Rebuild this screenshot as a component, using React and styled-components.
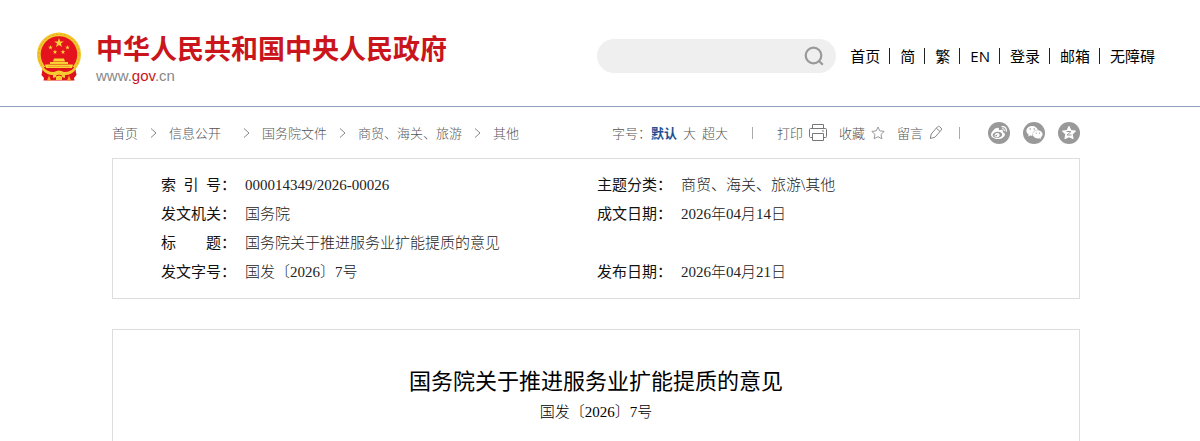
import React, { useState } from "react";
import styled, { createGlobalStyle } from "styled-components";
import { FaWeibo, FaWeixin } from "react-icons/fa";

const navLinks = ["首页", "简", "繁", "EN", "登录", "邮箱", "无障碍"];

const crumbs = [
  { label: "首页" },
  { label: "信息公开", wide: true },
  { label: "国务院文件" },
  { label: "商贸、海关、旅游" },
  { label: "其他" },
];

const fontSizes = ["默认", "大", "超大"];

export default function App() {
  const [keyword, setKeyword] = useState("");
  const [size, setSize] = useState("默认");

  return (
    <>
      <GlobalStyle />
      <Header>
        <Logo href="#">
          <Emblem />
          <LogoText>
            <SiteName>中华人民共和国中央人民政府</SiteName>
            <SiteUrl>
              www.<span>gov</span>.cn
            </SiteUrl>
          </LogoText>
        </Logo>
        <HeaderTools>
          <SearchForm onSubmit={(e) => e.preventDefault()}>
            <SearchInput
              type="text"
              aria-label="搜索"
              value={keyword}
              onChange={(e) => setKeyword(e.target.value)}
            />
            <SearchButton type="submit" aria-label="搜索">
              <SearchIcon />
            </SearchButton>
          </SearchForm>
          <Nav>
            {navLinks.map((item) => (
              <NavLink key={item} href="#">
                {item}
              </NavLink>
            ))}
          </Nav>
        </HeaderTools>
      </Header>

      <Main>
        <Toolbar>
          <Crumbs>
            {crumbs.map((item, i) => (
              <React.Fragment key={item.label}>
                {i > 0 && <Chevron />}
                <Crumb href="#" $wide={item.wide}>
                  {item.label}
                </Crumb>
              </React.Fragment>
            ))}
          </Crumbs>
          <Tools>
            <SizeGroup>
              <span>字号：</span>
              {fontSizes.map((item) => (
                <SizeButton
                  key={item}
                  type="button"
                  $active={item === size}
                  onClick={() => setSize(item)}
                >
                  {item}
                </SizeButton>
              ))}
            </SizeGroup>
            <Divider />
            <Actions>
              <ToolButton type="button">
                打印
                <PrintIcon />
              </ToolButton>
              <ToolButton type="button">
                收藏
                <StarIcon />
              </ToolButton>
              <ToolButton type="button">
                留言
                <PencilIcon />
              </ToolButton>
            </Actions>
            <Divider />
            <Shares>
              <ShareLink href="#" aria-label="微博">
                <FaWeibo size={16} />
              </ShareLink>
              <ShareLink href="#" aria-label="微信">
                <FaWeixin size={17} />
              </ShareLink>
              <ShareLink href="#" aria-label="QQ空间">
                <QzoneIcon />
              </ShareLink>
            </Shares>
          </Tools>
        </Toolbar>

        <InfoBox>
          <InfoTable>
            <colgroup>
              <LabelCol />
              <ValueCol />
              <LabelCol />
              <col />
            </colgroup>
            <tbody>
              <tr>
                <Label>索&nbsp;&nbsp;引&nbsp;&nbsp;号：</Label>
                <Value>000014349/2026-00026</Value>
                <Label>主题分类：</Label>
                <Value>商贸、海关、旅游\其他</Value>
              </tr>
              <tr>
                <Label>发文机关：</Label>
                <Value>国务院</Value>
                <Label>成文日期：</Label>
                <Value>2026年04月14日</Value>
              </tr>
              <tr>
                <Label>标{"\u3000\u3000"}题：</Label>
                <Value colSpan={3}>国务院关于推进服务业扩能提质的意见</Value>
              </tr>
              <tr>
                <Label>发文字号：</Label>
                <Value>国发〔2026〕7号</Value>
                <Label>发布日期：</Label>
                <Value>2026年04月21日</Value>
              </tr>
            </tbody>
          </InfoTable>
        </InfoBox>

        <Article>
          <Title>国务院关于推进服务业扩能提质的意见</Title>
          <DocNumber>国发〔2026〕7号</DocNumber>
        </Article>
      </Main>
    </>
  );
}

function Emblem() {
  const star = "M0-5 1.2-1.6 4.8-1.6 1.9.6 3 4 0 1.9-3 4-1.9.6-4.8-1.6-1.2-1.6Z";
  return (
    <svg width="46" height="50" viewBox="0 0 46 50" aria-hidden="true">
      <circle cx="23" cy="22.500" r="22" fill="#f3c62c" />
      <circle cx="23" cy="22.500" r="20.300" fill="none" stroke="#dfa01c" strokeWidth=".8" strokeDasharray="2 2" />
      <circle cx="23" cy="22.500" r="18.300" fill="#e5131d" />
      <path d="M7 35h32l1.500 8-2.500 3 .5 2.500H7.500L8 46l-2.500-3Z" fill="#df121c" />
      <g fill="#f8d535">
        <path d={star} transform="translate(23 11)" />
        <path d={star} transform="translate(14.500 15.500) scale(.48)" />
        <path d={star} transform="translate(31.500 15.500) scale(.48)" />
        <path d={star} transform="translate(19 20) scale(.48)" />
        <path d={star} transform="translate(27 20) scale(.48)" />
        <path d="M18 26.500h10l1 3H17ZM14 30h18v2H14ZM9 32.500h28L36 36H10Z" />
      </g>
      <path d="M15 32.300h16M12 34.500h22" stroke="#e5781c" strokeWidth=".5" />
      <path d="M7 34q3 6 11 6 5-3 10 0 8 0 11-6l1 3q-4 6-11 6l-2 1q-4-2-8 0l-2-1Q10 43 6 37Z" fill="#f5cb30" />
      <path d="M17 43q6-5 12 0v3l-3-1v3h-6v-3l-3 1Z" fill="#f5cb30" />
      <path d="M20 44q3-2 6 0" fill="none" stroke="#df121c" />
      <path d="M11 48.500l2-5 2 5ZM31 48.500l2-5 2 5Z" fill="#f5a52a" />
    </svg>
  );
}

function SearchIcon() {
  return (
    <svg width="20" height="20" viewBox="0 0 20 20" fill="none" stroke="#999" strokeWidth="2.200" aria-hidden="true">
      <circle cx="9.500" cy="9.500" r="7.800" />
      <path d="m14.500 14.500 4.300 4.300" />
    </svg>
  );
}

function Chevron() {
  return (
    <svg width="7" height="10" viewBox="0 0 7 10" fill="none" stroke="#888" aria-hidden="true">
      <path d="m1 .5 5 4.500-5 4.500" />
    </svg>
  );
}

function PrintIcon() {
  return (
    <svg width="18" height="17" viewBox="0 0 18 17" fill="none" stroke="#777" aria-hidden="true">
      <path d="M3.500 4.500v-4h11v4M3.500 13.500h-2a1 1 0 0 1-1-1v-7a1 1 0 0 1 1-1h15a1 1 0 0 1 1 1v7a1 1 0 0 1-1 1h-2M3.500 9.500h11v7h-11ZM13 7h2" />
    </svg>
  );
}

function StarIcon() {
  return (
    <svg width="14" height="14" viewBox="0 0 14 14" fill="none" stroke="#999" strokeLinejoin="round" aria-hidden="true">
      <path d="m7 1 1.800 3.900 4.400.5-3.200 3 .9 4.400L7 10.700l-3.900 2.100.9-4.400-3.200-3 4.400-.5Z" />
    </svg>
  );
}

function PencilIcon() {
  return (
    <svg width="14" height="15" viewBox="0 0 14 15" fill="none" stroke="#888" strokeLinejoin="round" aria-hidden="true">
      <path d="M1.300 13.500 2.200 9 8.500 1.800q1-1 2.100-.1l1.500 1.300q1 1 .1 2.100L6 12.200ZM7.300 3.200l3.700 3.300" />
    </svg>
  );
}

function QzoneIcon() {
  return (
    <svg width="16" height="16" viewBox="0 0 16 16" fill="#fff" aria-hidden="true">
      <path
        d="m8 1.300 2 4.200 4.600.6-3.300 3.200.8 4.500L8 11.700l-4.100 2.100.8-4.500L1.400 6.100l4.600-.6Z"
        stroke="#fff"
        strokeLinejoin="round"
      />
      <path d="M5.500 6.500h4.500L6 10h4.500" fill="none" stroke="#999" />
    </svg>
  );
}

const GlobalStyle = createGlobalStyle`
  * {
    box-sizing: border-box;
  }
  body {
    margin: 0;
    background: #fff;
    color: #222;
    font-family: "Liberation Serif", "Noto Sans CJK SC", serif;
    font-weight: 300;
  }
  a {
    color: inherit;
    text-decoration: none;
  }
  button {
    padding: 0;
    border: none;
    background: none;
    color: inherit;
    font: inherit;
    cursor: pointer;
  }
  svg {
    display: block;
    flex-shrink: 0;
  }
`;

const Header = styled.header`
  display: flex;
  align-items: flex-start;
  justify-content: space-between;
  padding: 32px 45px 21px 36px;
  border-bottom: 1px solid #8fa0bd;
`;

const Logo = styled.a`
  display: flex;
  align-items: flex-start;
  gap: 14px;
`;

const LogoText = styled.div`
  display: flex;
  flex-direction: column;
  gap: 3px;
`;

const SiteName = styled.span`
  color: #c9151b;
  font-family: "Noto Sans CJK SC", sans-serif;
  font-size: 27px;
  font-weight: 700;
  line-height: 32px;
  white-space: nowrap;
`;

const SiteUrl = styled.span`
  color: #888;
  font-family: "Liberation Sans", sans-serif;
  font-size: 15px;
  font-weight: 400;
  line-height: 18px;

  span {
    color: #c9151b;
  }
`;

const HeaderTools = styled.div`
  display: flex;
  align-items: center;
  height: 48px;
`;

const SearchForm = styled.form`
  display: flex;
  align-items: center;
  width: 239px;
  height: 34px;
  padding: 0 12px 0 16px;
  border-radius: 17px;
  background: #efefef;
`;

const SearchInput = styled.input`
  flex: 1;
  min-width: 0;
  border: none;
  background: transparent;
  font-size: 15px;
  &:focus {
    outline: none;
  }
`;

const SearchButton = styled.button`
  display: flex;
`;

const Nav = styled.nav`
  display: flex;
  align-items: center;
  margin-left: 14px;
  color: #000;
  font-family: "Open Sans", "Noto Sans CJK SC", sans-serif;
  font-size: 15px;
  font-weight: 400;
  line-height: 16px;
  white-space: nowrap;
`;

const NavLink = styled.a`
  & + & {
    margin-left: 9px;
    padding-left: 10px;
    border-left: 1px solid #222;
  }
`;

const Main = styled.main`
  padding: 0 120px 0 112px;
`;

const Toolbar = styled.div`
  display: flex;
  align-items: center;
  justify-content: space-between;
  height: 51px;
  color: #555;
  font-size: 13px;
  white-space: nowrap;
`;

const Crumbs = styled.nav`
  display: flex;
  align-items: center;
  gap: 12px;
`;

const Crumb = styled.a`
  margin-right: ${(props) => (props.$wide ? "10px" : "0")};
`;

const Tools = styled.div`
  display: flex;
  align-items: center;
`;

const SizeGroup = styled.div`
  display: flex;
  gap: 6px;

  span {
    margin-right: -6px;
  }
`;

const SizeButton = styled.button`
  color: ${(props) => (props.$active ? "#1c4f93" : "inherit")};
  font-weight: ${(props) => (props.$active ? "700" : "inherit")};
`;

const Divider = styled.span`
  width: 1px;
  height: 12px;
  margin: 0 24px;
  background: #aaa;
`;

const Actions = styled.div`
  display: flex;
  gap: 12px;
  margin-right: -8px;
`;

const ToolButton = styled.button`
  display: flex;
  align-items: center;
  gap: 6px;
`;

const Shares = styled.div`
  display: flex;
  gap: 13px;
  margin-left: 4px;
`;

const ShareLink = styled.a`
  display: flex;
  align-items: center;
  justify-content: center;
  width: 22px;
  height: 22px;
  border-radius: 50%;
  background: #999;
  color: #fff;
`;

const InfoBox = styled.section`
  padding: 12px 48px 11px;
  border: 1px solid #ddd;
`;

const InfoTable = styled.table`
  width: 100%;
  table-layout: fixed;
  border-collapse: collapse;
  font-size: 15px;
  line-height: 29px;
`;

const LabelCol = styled.col`
  width: 84px;
`;

const ValueCol = styled.col`
  width: 352px;
`;

const Label = styled.th.attrs({ scope: "row" })`
  padding: 0;
  color: #111;
  font-weight: 400;
  text-align: left;
  white-space: nowrap;
`;

const Value = styled.td`
  padding: 0;
`;

const Article = styled.article`
  margin-top: 30px;
  padding: 36px 48px 14px;
  border: 1px solid #ddd;
  border-bottom: none;
  color: #000;
  text-align: center;
`;

const Title = styled.h1`
  margin: 0;
  font-size: 22px;
  font-weight: 400;
  line-height: 32px;
`;

const DocNumber = styled.p`
  margin: 0;
  font-size: 15px;
  line-height: 29px;
`;
